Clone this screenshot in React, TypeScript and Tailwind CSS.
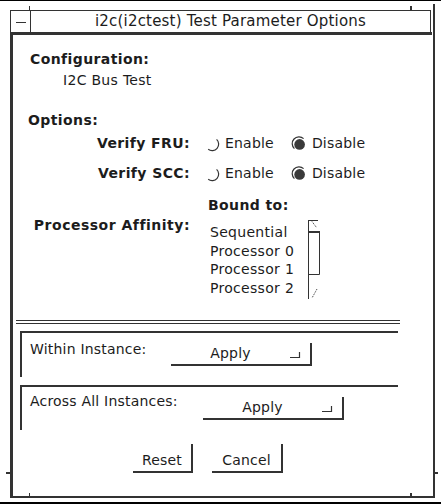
import React from "react";

const LINE = "#333333";

function RadioOff() {
  return (
    <svg width="16" height="16" viewBox="0 0 16 16" className="shrink-0">
      <path d="M4.2 13.3 A6.5 6.5 0 0 0 12.6 3.4" fill="none" stroke={LINE} strokeWidth="1.2" />
    </svg>
  );
}

function RadioOn() {
  return (
    <svg width="16" height="16" viewBox="0 0 16 16" className="shrink-0">
      <path d="M12.6 2.6 A6.5 6.5 0 0 0 3.4 12.6" fill="none" stroke={LINE} strokeWidth="1.2" />
      <circle cx="8.6" cy="8.4" r="5.3" fill="#3a3a3a" />
    </svg>
  );
}

function MenuArrow() {
  return (
    <svg width="11" height="8" viewBox="0 0 11 8" className="shrink-0">
      <path d="M0 6.5 H9.5 V1" fill="none" stroke={LINE} strokeWidth="1.2" />
    </svg>
  );
}

function ApplyButton() {
  return (
    <div className="flex items-center w-[141px] h-[23px] border-r-2 border-b-2 border-[#333]">
      <div className="flex-1 text-center">Apply</div>
      <div className="mr-[9px] mt-[2px]">
        <MenuArrow />
      </div>
    </div>
  );
}

function Scrollbar() {
  return (
    <svg width="14" height="80" viewBox="0 0 14 80" className="shrink-0">
      <line x1="1.5" y1="0" x2="1.5" y2="79" stroke={LINE} strokeWidth="1" />
      <line x1="1" y1="0.5" x2="11" y2="0.5" stroke={LINE} strokeWidth="1" />
      <line x1="5" y1="1.5" x2="9.5" y2="7.5" stroke={LINE} strokeWidth="1" strokeDasharray="1 1" />
      <line x1="1" y1="12" x2="13" y2="12" stroke={LINE} strokeWidth="2" />
      <line x1="12.5" y1="12" x2="12.5" y2="54.5" stroke={LINE} strokeWidth="1" />
      <line x1="1" y1="54.5" x2="12.5" y2="54.5" stroke={LINE} strokeWidth="1" />
      <line x1="10" y1="69" x2="5" y2="78" stroke={LINE} strokeWidth="1" strokeDasharray="1 1" />
    </svg>
  );
}

export default function App() {
  return (
    <div className="relative w-[441px] h-[504px] overflow-hidden bg-white text-[#1c1c1c] font-['DejaVu_Sans',sans-serif] text-[14px] leading-[17px] tracking-[0.2px]">
      <div className="h-px bg-black" />

      {/* window */}
      <div className="ml-[10px] mt-[9px] w-[425px] h-[488px] flex flex-col border-r-2 border-b-2 border-[#333]">
        {/* title bar */}
        <div className="flex w-[421px] h-[22px] border-t border-l border-r border-[#333]">
          <div className="w-[20px] border-r border-[#333] flex items-center justify-center">
            <div className="w-[10px] h-px bg-[#333] mt-[1px]" />
          </div>
          <div className="flex-1 text-center text-[15px] leading-[21px] tracking-[0.2px]">
            i2c(i2ctest) Test Parameter Options
          </div>
        </div>
        <div className="w-[422px] h-[3px] bg-[#333]" />

        {/* body */}
        <div className="flex-1 flex flex-col border-l-[3px] border-[#333]">
          <div className="mt-[16px] ml-[17px] font-bold tracking-[0.4px]">Configuration:</div>
          <div className="mt-[4px] ml-[50px] tracking-[0.3px]">I2C Bus Test</div>
          <div className="mt-[23px] ml-[15px] font-bold tracking-[0.4px]">Options:</div>

          <div className="mt-[6px] flex items-center">
            <div className="w-[177px] text-right font-bold tracking-[0.4px]">Verify FRU:</div>
            <div className="ml-[14px] flex items-center">
              <RadioOff />
              <span className="ml-[5px]">Enable</span>
              <div className="ml-[17px] flex items-center">
                <RadioOn />
                <span className="ml-[5px]">Disable</span>
              </div>
            </div>
          </div>

          <div className="mt-[13px] flex items-center">
            <div className="w-[177px] text-right font-bold tracking-[0.4px]">Verify SCC:</div>
            <div className="ml-[14px] flex items-center">
              <RadioOff />
              <span className="ml-[5px]">Enable</span>
              <div className="ml-[17px] flex items-center">
                <RadioOn />
                <span className="ml-[5px]">Disable</span>
              </div>
            </div>
          </div>

          <div className="mt-[15px] flex items-start">
            <div className="w-[177px] pt-[20px] text-right font-bold tracking-[0.5px]">Processor Affinity:</div>
            <div className="ml-[18px] flex flex-col">
              <div className="font-bold tracking-[0.4px]">Bound to:</div>
              <div className="mt-[6px] flex items-start">
                <div className="ml-[2px] w-[97px] pt-[3px] leading-[18.5px] tracking-[0.3px]">
                  <div>Sequential</div>
                  <div>Processor 0</div>
                  <div>Processor 1</div>
                  <div>Processor 2</div>
                </div>
                <Scrollbar />
              </div>
            </div>
          </div>

          {/* double separator */}
          <div className="mt-[20px] ml-[3px] w-[384px] h-[4px] border-t border-b border-[#333]" />

          {/* within instance */}
          <div className="mt-[7px] ml-[7px] w-[378px] h-[46px] border-t-2 border-l-2 border-[#333] flex items-start pt-[8px]">
            <div className="ml-[8px] w-[141px]">Within Instance:</div>
            <div className="mt-[2px]">
              <ApplyButton />
            </div>
          </div>

          {/* across all instances */}
          <div className="mt-[8px] ml-[7px] w-[378px] h-[45px] border-t-2 border-l-2 border-[#333] flex items-start pt-[6px]">
            <div className="ml-[8px] w-[173px]">Across All Instances:</div>
            <div className="mt-[4px]">
              <ApplyButton />
            </div>
          </div>

          {/* buttons */}
          <div className="mt-[14px] flex">
            <div className="ml-[120px] w-[60px] h-[29px] pt-[5px] flex items-center justify-center border-r-2 border-b-2 border-[#333]">
              Reset
            </div>
            <div className="ml-[19px] w-[71px] h-[29px] pt-[5px] flex items-center justify-center border-r-2 border-b-2 border-[#333]">
              Cancel
            </div>
          </div>
        </div>
      </div>

      <div className="mt-[4px] h-[2px] bg-black" />

      {/* resize corner ticks */}
      <div className="absolute left-[29px] top-[6px] w-px h-[4px] bg-[#333]" />
      <div className="absolute left-[410px] top-[6px] w-[2px] h-[4px] bg-[#333]" />
      <div className="absolute left-[433px] top-[4px] w-[2px] h-[6px] bg-[#333]" />
      <div className="absolute left-[6px] top-[472px] w-[4px] h-[2px] bg-[#333]" />
      <div className="absolute left-[435px] top-[472px] w-[3px] h-[2px] bg-[#333]" />
      <div className="absolute left-[29px] top-[493px] w-px h-[3px] bg-[#333]" />
      <div className="absolute left-[410px] top-[493px] w-[2px] h-[3px] bg-[#333]" />
    </div>
  );
}
